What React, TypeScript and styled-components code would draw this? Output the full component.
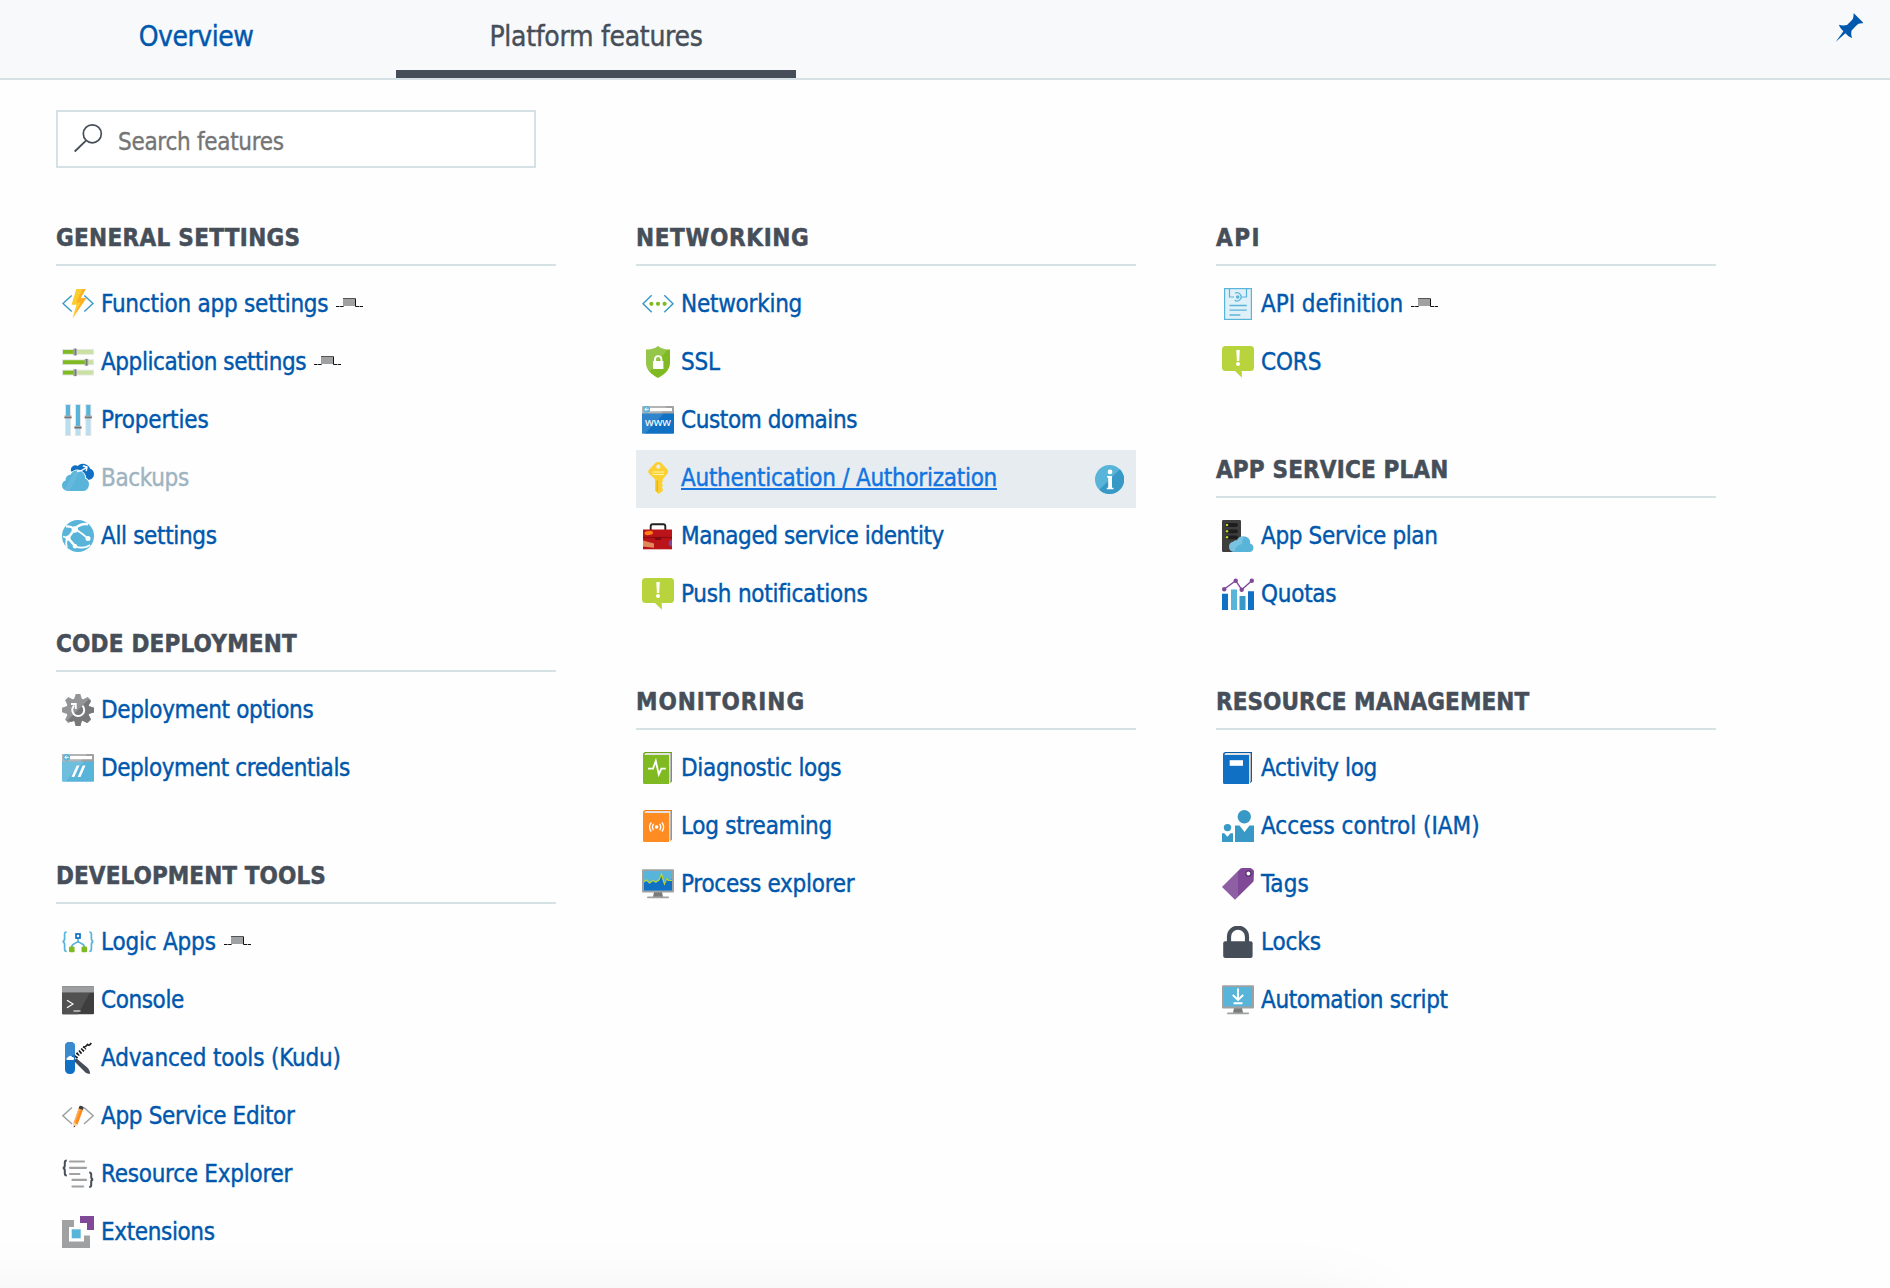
import React from 'react';
import styled, { createGlobalStyle, css } from 'styled-components';

const GlobalStyle = createGlobalStyle`
  html, body { margin: 0; padding: 0; }
  body {
    background: #fefefe;
    overflow: hidden;
    font-family: "DejaVu Sans Condensed", "DejaVu Sans", Verdana, sans-serif;
  }
  *, *::before, *::after { box-sizing: border-box; }
`;

const Page = styled.div`
  position: relative;
  height: 1288px;
  overflow: hidden;
  background: #fefefe;
`;

const TabBar = styled.nav`
  display: flex;
  height: 80px;
  background: #f8f9fb;
  border-bottom: 2px solid #d6e1e5;
`;

const Tab = styled.a<{ $active?: boolean; $tracking: number }>`
  width: ${p => (p.$active ? 400 : 396)}px;
  height: 78px;
  padding-right: ${p => (p.$active ? 0 : 4)}px;
  text-align: center;
  font-size: 28px;
  line-height: 74px;
  letter-spacing: ${p => p.$tracking}px;
  -webkit-text-stroke: 0.4px currentColor;
  color: ${p => (p.$active ? '#464f59' : '#0058ad')};
  ${p => p.$active && css`border-bottom: 8px solid #464f59;`}
`;

const PinButton = styled.div`
  margin: 13px 26px 0 auto;
  width: 29px;
  height: 30px;
`;

const Content = styled.main`
  padding: 30px 56px 0;
`;

const SearchBox = styled.div`
  display: flex;
  width: 480px;
  height: 58px;
  border: 2px solid #d6e1e5;
  background: #fff;
`;

const SearchGlyph = styled.svg`
  width: 32px;
  height: 32px;
  margin: 10px 0 0 15px;
`;

const SearchInput = styled.input`
  flex: 1;
  min-width: 0;
  height: 54px;
  padding: 6px 0 0;
  margin-left: 13px;
  border: 0;
  outline: 0;
  background: transparent;
  font: 24px "DejaVu Sans Condensed", "DejaVu Sans", sans-serif;
  letter-spacing: -0.29px;
  -webkit-text-stroke: 0.35px #757575;
  color: #464f59;
  &::placeholder { color: #757575; opacity: 1; }
`;

const Columns = styled.div`
  display: grid;
  grid-template-columns: repeat(3, 500px);
  column-gap: 80px;
  padding-top: 38px;
  align-items: start;
`;

const Section = styled.section`
  padding-bottom: 46px;
`;

const Heading = styled.h2<{ $tracking: number }>`
  height: 60px;
  margin: 0 0 10px;
  padding-top: 8px;
  border-bottom: 2px solid #d6e1e5;
  font-size: 24px;
  font-weight: 700;
  line-height: 48px;
  letter-spacing: ${p => p.$tracking}px;
  -webkit-text-stroke: 0.5px currentColor;
  color: #464f59;
  white-space: nowrap;
`;

const Row = styled.div<{ $hover?: boolean }>`
  display: flex;
  height: 58px;
  padding: 0 12px 0 6px;
  background: ${p => (p.$hover ? '#e7ecf0' : 'transparent')};
`;

const RowIcon = styled.svg`
  flex: none;
  width: 32px;
  height: 32px;
  margin-top: 12px;
`;

const Label = styled.a<{ $tracking: number; $state?: 'hover' | 'disabled' }>`
  margin-left: 7px;
  font-size: 24px;
  line-height: 56px;
  letter-spacing: ${p => p.$tracking}px;
  -webkit-text-stroke: 0.4px currentColor;
  white-space: nowrap;
  color: ${p => (p.$state === 'hover' ? '#1174e0' : p.$state === 'disabled' ? '#9fb4c1' : '#0058ad')};
  ${p => p.$state === 'hover' && css`
    text-decoration: underline;
    text-decoration-thickness: 2px;
    text-underline-offset: 2px;
    text-decoration-skip-ink: none;
  `}
`;

const TabPin = styled.svg`
  flex: none;
  width: 27px;
  height: 9px;
  margin: 22px 0 0 8px;
`;

const InfoBadge = styled.svg`
  flex: none;
  width: 29px;
  height: 29px;
  margin: 15px 0 0 auto;
`;

const BottomShade = styled.div`
  position: absolute;
  left: -200px;
  top: 1318px;
  width: 1565px;
  height: 300px;
  box-shadow: 0 0 80px rgba(0, 0, 0, 0.1);
`;

const browserFrame = (body: string) => (
  <>
    <path d="M0 10V3a1 1 0 0 1 1-1h30a1 1 0 0 1 1 1v7z" fill="#a0a1a2" />
    <path d="M0 10V3a1 1 0 0 1 1-1h24l-7 8z" fill="#b3b4b5" />
    <path d="M0 9.5h32v19.3a1 1 0 0 1-1 1H1a1 1 0 0 1-1-1z" fill={body} />
    <path d="M0 9.5h22L3 29.8H1a1 1 0 0 1-1-1z" fill="#fff" opacity=".14" />
    <path d="M8 4h22v3.2H8z" fill="#fff" />
    <circle cx="4.6" cy="5.3" r="3.4" fill="#59b4d9" />
    <path d="M6.8 5.3H3M4.6 3.5 2.8 5.3l1.8 1.8" stroke="#fff" strokeWidth="1" fill="none" />
  </>
);

const book = (fill: string, dark: string) => (
  <>
    <path d="M3 0h27v29.5l-2 1.6V2H1.6z" fill={dark} />
    <path d="M3.6 1.1h25v27l-1.4 1.4V3H2z" fill="#e2e2e2" />
    <path d="M28 2.5 29 1.5v27.3L27.6 31z" fill="#b9babb" />
    <path d="M1 2.2C1 1 2 .2 3 .2L2.6 3.1H27V32H2.5A1.5 1.5 0 0 1 1 30.5z" fill={fill} />
  </>
);

const monitor = (
  <>
    <path d="M12 24h8l1 5H11z" fill="#7a7a7a" />
    <rect x="5" y="28.4" width="22" height="1.8" rx=".8" fill="#a0a1a2" />
    <rect x="0" y="1.2" width="32" height="23.2" rx="1" fill="#a0a1a2" />
    <rect x="2" y="3" width="28" height="19.4" fill="#59b4d9" />
  </>
);

const bubble = (
  <>
    <path d="M3.5 0h25A3.5 3.5 0 0 1 32 3.5v18a3.500 3.500 0 0 1-3.500 3.500h-8.700v6.700L13 25H3.500A3.500 3.500 0 0 1 0 21.500v-18A3.500 3.500 0 0 1 3.500 0z" fill="#b8d43c" />
    <path d="M14.300 4h3.500l-.6 11h-2.300z" fill="#fff" />
    <circle cx="16" cy="18" r="2" fill="#fff" />
  </>
);

const icons: Record<string, React.ReactNode> = {
  functions: (
    <>
      <path d="M9.7 7.500 1 15.500l8.700 8M22.300 7.500l8.700 8-8.700 8" stroke="#3999c6" strokeWidth="1.400" fill="none" />
      <path d="M14.300 1h9.400l-5 9h5.700L10.500 30.300l4-13.600h-5z" fill="#fccd2e" />
      <path d="M23.700 1l-5 9h5.700L10.500 30.300l8.200-15.800h-4.500L20.500 1z" fill="#ff9a1a" opacity=".6" />
    </>
  ),
  appSettings: (
    <>
      {[[3, 12], [13.3, 23.3], [23.7, 12]].map(([y, x]) => (
        <g key={y}>
          <rect x="0" y={y} width="32" height="5.8" fill="#e3e6e0" />
          <rect x="1" y={y + 1} width="30" height="3.8" fill="#c9e2a2" />
          <rect x="1" y={y + 1} width={x} height="3.8" fill="#7fba22" />
          <rect x={x - 0.7} y={y - 0.4} width="3.6" height="6.8" fill="#a5a7a8" />
          <rect x={x + 0.8} y={y - 0.4} width="1" height="6.8" fill="#6d6f71" />
        </g>
      ))}
    </>
  ),
  properties: (
    <>
      {[[3, 13], [13, 23.3], [23.3, 13]].map(([x, y]) => (
        <g key={x}>
          <rect x={x} y="0" width="6" height="32" fill="#e3e4e5" />
          <rect x={x + 1} y="1" width="4" height="30" fill="#b7dff0" />
          <rect x={x + 1} y="1" width="4" height={y} fill="#59b4d9" />
          <rect x={x - 0.5} y={y - 1.5} width="7" height="3.2" fill="#a9abac" />
          <rect x={x - 0.5} y={y - 0.2} width="7" height="1" fill="#66686a" />
        </g>
      ))}
    </>
  ),
  backups: (
    <>
      <path d="M9 9A4.500 4.500 0 0 1 15.700 4a7.600 7.600 0 0 1 12.500 2.800A5.700 5.700 0 0 1 32 12.300a5.600 5.600 0 0 1-4 5.200L20 20z" fill="#0f70c4" />
      <path d="M5.600 29A5.700 5.700 0 0 1 0 23.500a5.300 5.300 0 0 1 3.600-5 4.800 4.800 0 0 1 4.900-5.700 7.800 7.800 0 0 1 14.700 3.700A6.500 6.500 0 0 1 27 22.600 6.300 6.300 0 0 1 20.600 29z" fill="#59b4d9" stroke="#fefefe" strokeWidth="2" paintOrder="stroke" />
      <path d="M15 9.500c3-.3 6.500-1.600 9.500-4M20.800 3.800l4.200 1.200-.8 4.200" stroke="#fefefe" strokeWidth="1.500" fill="none" />
      <path d="M2.500 27.800 12 10.500A8 8 0 0 1 18 9.200L7.500 29H5.600a5.600 5.600 0 0 1-3.100-1.200z" fill="#fff" opacity=".08" />
    </>
  ),
  globe: (
    <>
      <circle cx="16" cy="16" r="16" fill="#59b4d9" />
      <g stroke="#fefefe" fill="none">
        <path d="M4 6.500c3.500-.5 6 .5 8.500 2.500C16 5.500 20.500 3.500 26 4.200" strokeWidth="2.400" />
        <path d="M12.500 9.500 6 18M6 18l7 8" strokeWidth="2.600" />
        <path d="M1 16.500 5.500 18c-1.500 3-1.800 6-.5 9.500M13 26.500c6 2 11 1.500 15-1.500" strokeWidth="1.800" />
        <path d="M14 9.500c4 2.500 8 5.500 12 9" strokeWidth="1.800" />
      </g>
      <g fill="#fefefe">
        <circle cx="12.800" cy="9.500" r="3.200" />
        <circle cx="6" cy="18" r="2.600" />
        <circle cx="13" cy="26.300" r="2.200" />
        <circle cx="26" cy="18.500" r="2.500" />
      </g>
    </>
  ),
  gear: (
    <>
      <g fill="#949596">
        <circle cx="16" cy="16" r="11.800" />
        {[0, 45, 90, 135, 180, 225, 270, 315].map(a => (
          <path key={a} d="M13.700 0h4.600l1.900 6h-8.400z" transform={`rotate(${a} 16 16)`} />
        ))}
      </g>
      <path d="M26.800 5.200 5.200 26.800l4.400 1.100 3-1.200L13.700 32h4.600l1.600-5.600 5.100 2.700 4-3.800-2.800-5.300 5.800-1.600v-4.600L26.400 12l2.600-4.800z" fill="#777879" />
      <path d="M12.300 11.500a6 6 0 1 0 8.200.3" stroke="#fff" strokeWidth="2" fill="none" />
      <path d="M9 10h4.800v4.900" stroke="#fff" strokeWidth="1.800" fill="none" />
    </>
  ),
  credentials: (
    <>
      {browserFrame('#59b4d9')}
      <path d="M14.700 13.500h2.800L12.300 25H9.500zM20.700 13.500h2.800L18.500 25h-2.800z" fill="#fff" />
    </>
  ),
  logicApps: (
    <>
      <path d="M4.700 6C2.700 6 2.600 7 2.600 8.300v4.200c0 1.700-.5 2.900-2 3.100 1.500.2 2 1.400 2 3.100v4.400c0 1.400.1 2.400 2.100 2.400M27.300 6c2 0 2.100 1 2.100 2.300v4.200c0 1.700.5 2.900 2 3.100-1.500.2-2 1.400-2 3.100v4.400c0 1.400-.1 2.400-2.100 2.400" stroke="#59b4d9" strokeWidth="1.700" fill="none" />
      <path d="M16 12v3c0 2.500-6.300 1.500-6.300 6M16 15c0 2.500 6.300 1.500 6.300 6" stroke="#59b4d9" strokeWidth="1.600" fill="none" />
      <rect x="14" y="8" width="4" height="4" fill="#fff" stroke="#0f70c4" strokeWidth="1.700" />
      <rect x="7" y="20.500" width="5.600" height="5.700" rx="1.200" fill="#7fba22" />
      <rect x="19.500" y="20.500" width="5.600" height="5.700" rx="1.200" fill="#7fba22" />
    </>
  ),
  console: (
    <>
      <path d="M0 3.200a1 1 0 0 1 1-1h30a1 1 0 0 1 1 1v26a1 1 0 0 1-1 1H1a1 1 0 0 1-1-1z" fill="#3e3e3e" />
      <path d="M0 8.500h28L16 30.200H1a1 1 0 0 1-1-1z" fill="#515151" />
      <path d="M0 8.600V3.200a1 1 0 0 1 1-1h30a1 1 0 0 1 1 1v5.400z" fill="#9d9e9f" />
      <path d="M5 16.200 11 20l-6 3.800M11.500 27h7" stroke="#fff" strokeWidth="1.100" fill="none" />
    </>
  ),
  kudu: (
    <>
      <path d="M13 17.500c1-1.500 1.500-1.200 2.500-.3l9.500 8c2 2 3 4 3.200 6.500-2 .2-4-.5-5.500-2L13 20z" fill="#464f59" />
      <path d="M13.500 15.500 16 12l3-2.500L23 5.500" stroke="#1b1b1b" strokeWidth="4" strokeDasharray="1.700 1.500" fill="none" />
      <path d="M21 5c1.500 1 3-.5 4.500-2.500 1.200 1.300 2.500.5 3.800-1.500" stroke="#1b1b1b" strokeWidth="1.500" fill="none" />
      <rect x="3" y="0" width="10" height="32" rx="4.500" fill="#0f70c4" />
      <path d="M3 4.500a4.500 4.500 0 0 1 10 0V12L3 19z" fill="#3a8ad0" />
      <path d="M5 18a1.700 1.700 0 0 1 .8-2.600 2.500 2.500 0 0 1 4.400-.4 1.700 1.700 0 0 1 1.300 3z" fill="#fff" />
    </>
  ),
  editor: (
    <>
      <path d="M10 7.500.9 15.800 10 24M22 7.500l9.100 8.300L22 24" stroke="#a0a1a2" strokeWidth="1.500" fill="none" />
      <path d="m16.600 8.500 4.300 1.500-5.200 14.200-3.900 3.300-.1-4.800z" fill="#ff8c1a" />
      <path d="m16.600 8.500 1.600.6L13 23.300l-1.300-.6z" fill="#ffae5c" />
      <path d="m11.700 22.700 4 1.500-3.900 3.300z" fill="#f6d6ad" />
      <path d="m12 25.500 1.300.7-1.500 1.300z" fill="#333" />
      <path d="m17.400 6.300c.6-1.200 4.700.2 4.300 1.600l-.8 2.100-4.300-1.500z" fill="#3e3e3e" />
    </>
  ),
  resourceExplorer: (
    <>
      <path d="M4.800 2.600c-1.800 0-2 .8-2 2v2.900c0 1.600-.6 2.300-1.900 2.500 1.300.2 1.900.9 1.900 2.500v2.900c0 1.200.2 2 2 2M27.200 14.500c1.800 0 2 .8 2 2v2.600c0 1.600.6 2.300 1.900 2.500-1.300.2-1.900.9-1.900 2.500v2.900c0 1.200-.2 2-2 2" stroke="#464f59" strokeWidth="2" fill="none" />
      <path d="M8 3.500h14M8 9.800h16M8 16h9.300M10.500 21.900H24M10.500 28.500h10.700" stroke="#a0a1a2" strokeWidth="2.200" strokeLinecap="round" />
    </>
  ),
  extensions: (
    <>
      <path d="M0 4h12v7H7v14.500h15v-6h6V32H0z" fill="#a0a1a2" />
      <path d="M18 0h14v14h-7V7h-7z" fill="#804998" />
      <rect x="9.700" y="13.300" width="9" height="9" fill="#59b4d9" />
    </>
  ),
  networking: (
    <>
      <path d="M9.700 7.200 1 15.700l8.700 8.500M22.300 7.200l8.700 8.500-8.700 8.500" stroke="#3999c6" strokeWidth="1.500" fill="none" />
      <g fill="#7fba22"><circle cx="9.400" cy="15.800" r="2.100" /><circle cx="16" cy="15.800" r="2.100" /><circle cx="22.600" cy="15.800" r="2.100" /></g>
    </>
  ),
  ssl: (
    <>
      <path d="M16 0c3 2.600 7.500 3.600 12 3.600V17c0 7-6 11.800-12 15C10 28.800 4 24 4 17V3.600C8.500 3.600 13 2.600 16 0z" fill="#7fba22" />
      <path d="M16 0c3 2.600 7.500 3.600 9.500 3.500L8 25.500C5.500 23 4 20.500 4 17V3.600C8.500 3.600 13 2.600 16 0z" fill="#fff" opacity=".18" />
      <rect x="11" y="15" width="10.400" height="8" fill="#fff" />
      <path d="M13 15.500v-2.200a3.200 3.200 0 0 1 6.400 0v2.200" stroke="#fff" strokeWidth="1.900" fill="none" />
    </>
  ),
  domains: (
    <>
      {browserFrame('#0f70c4')}
      <text x="16" y="22" textAnchor="middle" fill="#fff" fontSize="10" textLength="26" lengthAdjust="spacingAndGlyphs" fontFamily="'Noto Sans', sans-serif">www</text>
    </>
  ),
  key: (
    <>
      <path d="M13 1.200q3.300-2.400 6.600 0l5.700 6.200c1.200 1.300 1.100 2.600.2 4l-4.800 5.800v2.800l-1.200 1.200 1.200 1.200v1.800l-1.200 1.200 1.200 1.300v2.200L16.500 32 13 28.800V17.200L7 11.400c-1-1.400-1-2.700.2-4z" fill="#fcd02e" />
      <circle cx="16.300" cy="4.700" r="2.100" fill="#e7ecf0" />
      <path d="M10.500 10h11.600M10.500 12.500h11.600" stroke="#fff3b5" strokeWidth="1" />
      <path d="M15.200 18.500v11" stroke="#e0a90a" strokeWidth="1" />
    </>
  ),
  toolbox: (
    <>
      <path d="M8.700 10V6.200c0-1.300.7-2 2-2h10.600c1.300 0 2 .7 2 2V10" stroke="#222" strokeWidth="1.900" fill="none" />
      <rect x="1" y="9.500" width="29" height="19.800" fill="#ba141a" />
      <path d="M1 17.500h29" stroke="#8b0d12" strokeWidth="1.300" />
      <path d="M12.500 17.500h7l-1 2.600h-5z" fill="#7c0b10" />
      <ellipse cx="6.800" cy="13" rx="4.300" ry="2.100" fill="#ff7f1a" transform="rotate(-6 6.800 13)" />
      <path d="m1 20.500 11 3v4.200l-11-1.200z" fill="#e08a5a" />
      <path d="M30 20a3.300 3.300 0 1 0 0 6.600z" fill="#804998" />
    </>
  ),
  bubble,
  diagnostic: (
    <>
      {book('#7fba22', '#6fa51a')}
      <path d="M6 16.600h5l2.800-7.600 3 13.500 2.600-5.900h4.400" stroke="#fff" strokeWidth="1.800" fill="none" />
    </>
  ),
  streaming: (
    <>
      {book('#ff8c22', '#f07c14')}
      <circle cx="14.600" cy="17" r="1.800" fill="#fff" />
      <path d="M11.700 14a4.200 4.200 0 0 0 0 6M17.500 14a4.200 4.200 0 0 1 0 6M9.300 12.500a6.700 6.700 0 0 0 0 9M19.900 12.500a6.700 6.700 0 0 1 0 9" stroke="#fff" strokeWidth="1.300" fill="none" />
    </>
  ),
  process: (
    <>
      {monitor}
      <path d="M2 14.500 5 13l3 2.500 3-3 3 2.500 3-3 2-5 2.500 8.500 2.500-5 2 2 4-1v10.900H2z" fill="#0f70c4" />
      <path d="M2 13.500 4.500 12l3 3 3.500-2.500 2.500 1.500 3.500-2 2.500-6 3 10 2-5 2 1.500h3.500" stroke="#b8d432" strokeWidth="1.200" fill="none" />
    </>
  ),
  apiDefinition: (
    <>
      <rect x="2.600" y=".6" width="26.800" height="30.800" fill="#dff0f8" stroke="#59b4d9" strokeWidth="1.200" />
      <path d="M7.500 1v8h4.500M24.500 1v8H20" stroke="#59b4d9" strokeWidth="1.200" fill="none" />
      <path d="M13 5.300a4.100 4.100 0 1 1-.3 7" stroke="#59b4d9" strokeWidth="1.300" fill="none" />
      <circle cx="15.700" cy="9" r="1.800" fill="#59b4d9" />
      <path d="M7.500 17.500h17.300M7.500 22.200h17.300M7.500 27h10.800" stroke="#59b4d9" strokeWidth="1.300" />
    </>
  ),
  servicePlan: (
    <>
      <rect x="0" y="0" width="19" height="32" rx="1.200" fill="#3e3e3e" />
      {[5, 11.3, 17.3].map(y => (
        <g key={y}>
          <rect x="3" y={y - 1.9} width="13" height="3.8" rx="1.9" fill="#1e1e1e" />
          <circle cx="5" cy={y} r="1.3" fill="#b8d432" />
        </g>
      ))}
      <path d="M11.500 32a5.200 5.200 0 0 1-.5-10.200 4 4 0 0 1 4-1.500 7 7 0 0 1 13.300 3.500A4.200 4.200 0 0 1 28 32z" fill="#59b4d9" />
      <path d="M11.500 32a5.200 5.200 0 0 1-.5-10.200 4 4 0 0 1 4-1.500 7 7 0 0 1 8-3.900c-4 3-1.500 5.600-3.500 7.600-2 1.500-4 1-5.500 4z" fill="#fff" opacity=".2" />
    </>
  ),
  quotas: (
    <>
      <path d="M0 15.700h6V32H0zM26 13.200h6V32h-6z" fill="#0f70c4" />
      <path d="M9 11.500h6V32H9z" fill="#59b4d9" />
      <path d="M17.500 18h6v14h-6z" fill="#3999c6" />
      <path d="M2 11.300 13.700 2.700l6 9 10-9" stroke="#804998" strokeWidth="1.400" fill="none" />
      <g fill="#804998"><circle cx="2.200" cy="11.300" r="2.200" /><circle cx="13.700" cy="2.700" r="2.200" /><circle cx="19.700" cy="11.700" r="2.200" /><circle cx="29.800" cy="2.700" r="2.200" /></g>
    </>
  ),
  activity: (
    <>
      {book('#0f70c4', '#0c5ca4')}
      <rect x="7.700" y="8.200" width="13.300" height="5.600" fill="#fff" />
    </>
  ),
  iam: (
    <g fill="#3999c6">
      <circle cx="22.300" cy="6.700" r="6.700" />
      <path d="M13 15.500h4.500l5 6.500 5-6.500H32V32H13z" />
      <circle cx="5.500" cy="17.600" r="3.700" />
      <path d="M0 23.200h2.300l3.100 3.600 3.100-3.600H11V32H0z" />
    </g>
  ),
  tags: (
    <>
      <path d="M0 19 18.500.6Q19.200 0 20.200 0H28q1.300 0 2.200.9L31.400 2q.6.700.6 1.700l-.3 8.600q0 1-.7 1.700L13 31.800z" fill="#804998" />
      <path d="M16 3.100V28.800L13 31.800 0 19z" fill="#fff" opacity=".12" />
      <circle cx="26.400" cy="5.500" r="2.600" fill="#fefefe" stroke="#55306b" strokeWidth="1.300" />
    </>
  ),
  locks: (
    <>
      <path d="M7 17v-6.300a9 9 0 0 1 18 0V17" stroke="#464f59" strokeWidth="4.200" fill="none" />
      <rect x="1.200" y="15.200" width="29.400" height="16.800" rx="2" fill="#464f59" />
    </>
  ),
  automation: (
    <>
      {monitor}
      <path d="M16 4.500v11M10.800 11l5.200 5 5.200-5M11.500 19.200h9" stroke="#fff" strokeWidth="1.900" fill="none" />
    </>
  ),
};

type Item = { icon: string; label: string; tracking: number; pin?: boolean; state?: 'hover' | 'disabled' };
type Group = { title: string; tracking: number; items: Item[] };

const columns: Group[][] = [
  [
    {
      title: 'GENERAL SETTINGS', tracking: 0.3, items: [
        { icon: 'functions', label: 'Function app settings', tracking: -0.23, pin: true },
        { icon: 'appSettings', label: 'Application settings', tracking: -0.43, pin: true },
        { icon: 'properties', label: 'Properties', tracking: -0.15 },
        { icon: 'backups', label: 'Backups', tracking: -0.35, state: 'disabled' },
        { icon: 'globe', label: 'All settings', tracking: -0.35 },
      ],
    },
    {
      title: 'CODE DEPLOYMENT', tracking: 0.2, items: [
        { icon: 'gear', label: 'Deployment options', tracking: -0.34 },
        { icon: 'credentials', label: 'Deployment credentials', tracking: -0.42 },
      ],
    },
    {
      title: 'DEVELOPMENT TOOLS', tracking: 0.08, items: [
        { icon: 'logicApps', label: 'Logic Apps', tracking: -0.2, pin: true },
        { icon: 'console', label: 'Console', tracking: -0.41 },
        { icon: 'kudu', label: 'Advanced tools (Kudu)', tracking: -0.17 },
        { icon: 'editor', label: 'App Service Editor', tracking: -0.34 },
        { icon: 'resourceExplorer', label: 'Resource Explorer', tracking: -0.26 },
        { icon: 'extensions', label: 'Extensions', tracking: -0.37 },
      ],
    },
  ],
  [
    {
      title: 'NETWORKING', tracking: 0.65, items: [
        { icon: 'networking', label: 'Networking', tracking: -0.25 },
        { icon: 'ssl', label: 'SSL', tracking: -0.21 },
        { icon: 'domains', label: 'Custom domains', tracking: -0.4 },
        { icon: 'key', label: 'Authentication / Authorization', tracking: -0.27, state: 'hover' },
        { icon: 'toolbox', label: 'Managed service identity', tracking: -0.42 },
        { icon: 'bubble', label: 'Push notifications', tracking: -0.24 },
      ],
    },
    {
      title: 'MONITORING', tracking: 0.96, items: [
        { icon: 'diagnostic', label: 'Diagnostic logs', tracking: -0.32 },
        { icon: 'streaming', label: 'Log streaming', tracking: -0.26 },
        { icon: 'process', label: 'Process explorer', tracking: -0.27 },
      ],
    },
  ],
  [
    {
      title: 'API', tracking: 1.5, items: [
        { icon: 'apiDefinition', label: 'API definition', tracking: -0.04, pin: true },
        { icon: 'bubble', label: 'CORS', tracking: -0.12 },
      ],
    },
    {
      title: 'APP SERVICE PLAN', tracking: 0.15, items: [
        { icon: 'servicePlan', label: 'App Service plan', tracking: -0.36 },
        { icon: 'quotas', label: 'Quotas', tracking: -0.25 },
      ],
    },
    {
      title: 'RESOURCE MANAGEMENT', tracking: 0.06, items: [
        { icon: 'activity', label: 'Activity log', tracking: -0.38 },
        { icon: 'iam', label: 'Access control (IAM)', tracking: -0.02 },
        { icon: 'tags', label: 'Tags', tracking: 0.1 },
        { icon: 'locks', label: 'Locks', tracking: -0.12 },
        { icon: 'automation', label: 'Automation script', tracking: -0.36 },
      ],
    },
  ],
];

function FeatureRow({ item }: { item: Item }) {
  return (
    <Row $hover={item.state === 'hover'}>
      <RowIcon viewBox="0 0 32 32">{icons[item.icon]}</RowIcon>
      <Label $tracking={item.tracking} $state={item.state}>{item.label}</Label>
      {item.pin && (
        <TabPin viewBox="0 0 27 9">
          <path d="M7 .5h12.500v7.500H7z" fill="#a0a1a2" />
          <path d="M7 .5h12" stroke="#555" strokeWidth="1" fill="none" />
          <path d="M19.500 .5v8" stroke="#111" strokeWidth="1" fill="none" />
          <path d="M0 8.500h8M19.500 8.500H27" stroke="#111" strokeWidth="1" strokeDasharray="3.500 .6" fill="none" />
        </TabPin>
      )}
      {item.state === 'hover' && (
        <InfoBadge viewBox="0 0 29 29">
          <circle cx="14.500" cy="14.500" r="14.500" fill="#59b4d9" />
          <path d="M24.800 4.200A14.500 14.500 0 1 1 4.300 24.800z" fill="#3999c6" />
          <circle cx="15" cy="6.900" r="2.400" fill="#fff" />
          <path d="M12 11h5v11.700h1.500v1.600h-6.700v-1.600h1.400v-10.100H12z" fill="#fff" />
        </InfoBadge>
      )}
    </Row>
  );
}

export default function App() {
  return (
    <Page>
      <GlobalStyle />
      <TabBar>
        <Tab $tracking={-0.5}>Overview</Tab>
        <Tab $active $tracking={-0.3}>Platform features</Tab>
        <PinButton>
          <svg width="29" height="30" viewBox="0 0 29 30">
            <path d="M18.500.7c.5-.3 1 0 1.300.5l8 8c.5.600.3 1.200-.4 1.100-2.400-.3-4.300.5-6 2.100l-4.800 5c-.6 2.700-.6 5 .6 7.500-2.300-.5-5-2.400-6.800-4.600L.6 28.900l7.800-10.600c-2-1.700-3.700-4.200-4.600-6.500 2.500.8 5.500.9 8.200.3l4.500-4.500C18.500 5.700 18.600 3.500 18.500.7z" fill="#0058ad" />
          </svg>
        </PinButton>
      </TabBar>
      <Content>
        <SearchBox>
          <SearchGlyph viewBox="0 0 32 32">
            <circle cx="19.300" cy="11.800" r="9" stroke="#464f59" strokeWidth="1.700" fill="none" />
            <path d="M13 18.600 1.700 29.500" stroke="#464f59" strokeWidth="1.900" />
          </SearchGlyph>
          <SearchInput placeholder="Search features" />
        </SearchBox>
        <Columns>
          {columns.map((groups, i) => (
            <div key={i}>
              {groups.map(group => (
                <Section key={group.title}>
                  <Heading $tracking={group.tracking}>{group.title}</Heading>
                  {group.items.map(item => <FeatureRow key={item.label} item={item} />)}
                </Section>
              ))}
            </div>
          ))}
        </Columns>
      </Content>
      <BottomShade />
    </Page>
  );
}
